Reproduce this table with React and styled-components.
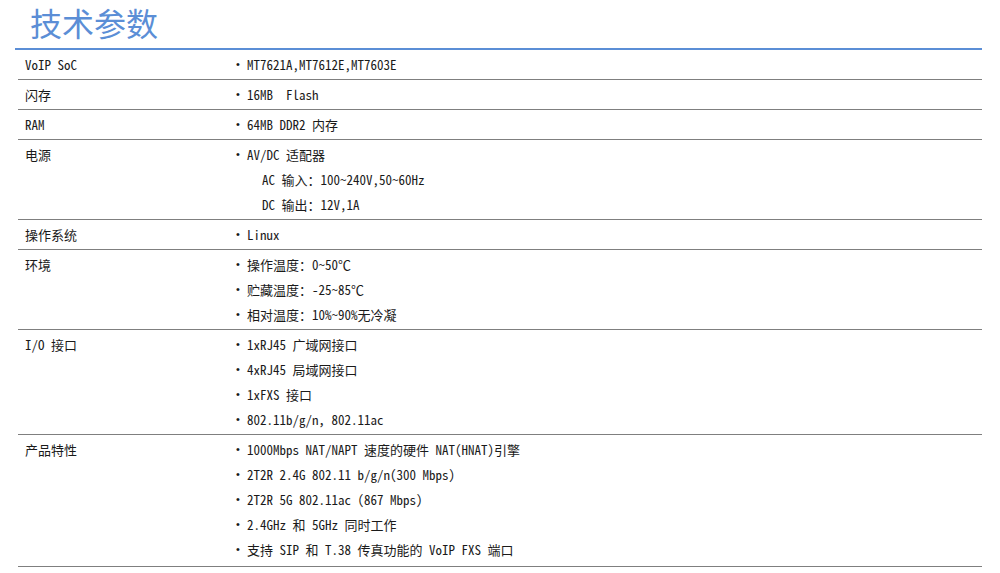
import styled, { createGlobalStyle } from "styled-components";

const GlobalStyle = createGlobalStyle`
  body {
    margin: 0;
    background: #ffffff;
  }
`;

// whole block, blue rule under the title starts at x=15
const Page = styled.div`
  width: 967px;
  margin-left: 15px;
`;

const Header = styled.div`
  padding-bottom: 4px;
  border-bottom: 2px solid #5b8ed6;
`;

const Title = styled.h1`
  margin: 0;
  padding-left: 15px;
  font-family: "Noto Sans CJK SC", sans-serif;
  font-weight: 400;
  font-size: 32px;
  line-height: 44px;
  color: #5b8ed6;
`;

const Table = styled.div`
  margin-left: 3px;
`;

/* one spec row: label left, bullet list right */
const Row = styled.div`
  display: grid;
  grid-template-columns: 218px 1fr;
  padding: 2px 0 ${(p) => (p.$last ? "4px" : "2px")};
  border-bottom: 1px solid #7f7f7f;
  font-family: "Noto Sans Mono CJK SC", "Noto Sans CJK SC", monospace;
  font-size: 13px;
  line-height: 25px;
  color: #1a1a1a;
  white-space: pre;
`;

const Label = styled.div`
  padding-left: 7px;
`;

const Items = styled.ul`
  margin: 0;
  padding: 0;
  list-style: none;
`;

const Item = styled.li`
  padding-left: ${(p) => (p.$sub ? "26px" : "11px")};
  position: relative;

  /* bullet dot sits ahead of the text */
  &::before {
    content: ${(p) => (p.$sub ? '""' : '"•"')};
    position: absolute;
    left: 0;
    font-family: "Liberation Sans", sans-serif;
    font-size: 11px;
  }
`;

const specs = [
  { label: "VoIP SoC", items: ["MT7621A,MT7612E,MT7603E"] },
  { label: "闪存", items: ["16MB  Flash"] },
  { label: "RAM", items: ["64MB DDR2 内存"] },
  {
    label: "电源",
    items: [
      "AV/DC 适配器",
      { text: "AC 输入：100~240V,50~60Hz", sub: true },
      { text: "DC 输出：12V,1A", sub: true },
    ],
  },
  { label: "操作系统", items: ["Linux"] },
  {
    label: "环境",
    items: ["操作温度：0~50℃", "贮藏温度：-25~85℃", "相对温度：10%~90%无冷凝"],
  },
  {
    label: "I/O 接口",
    items: ["1xRJ45 广域网接口", "4xRJ45 局域网接口", "1xFXS 接口", "802.11b/g/n，802.11ac"],
  },
  {
    label: "产品特性",
    items: [
      "1000Mbps NAT/NAPT 速度的硬件 NAT(HNAT)引擎",
      "2T2R 2.4G 802.11 b/g/n(300 Mbps)",
      "2T2R 5G 802.11ac (867 Mbps)",
      "2.4GHz 和 5GHz 同时工作",
      "支持 SIP 和 T.38 传真功能的 VoIP FXS 端口",
    ],
  },
];

const App = () => {
  return (
    <>
      <GlobalStyle />
      <Page>
        <Header>
          <Title>技术参数</Title>
        </Header>
        <Table>
          {specs.map((row, i) => (
            <Row key={row.label} $last={i === specs.length - 1}>
              <Label>{row.label}</Label>
              <Items>
                {row.items.map((it) => {
                  const item = typeof it === "string" ? { text: it } : it;
                  return (
                    <Item key={item.text} $sub={item.sub}>
                      {item.text}
                    </Item>
                  );
                })}
              </Items>
            </Row>
          ))}
        </Table>
      </Page>
    </>
  );
};

export default App;
